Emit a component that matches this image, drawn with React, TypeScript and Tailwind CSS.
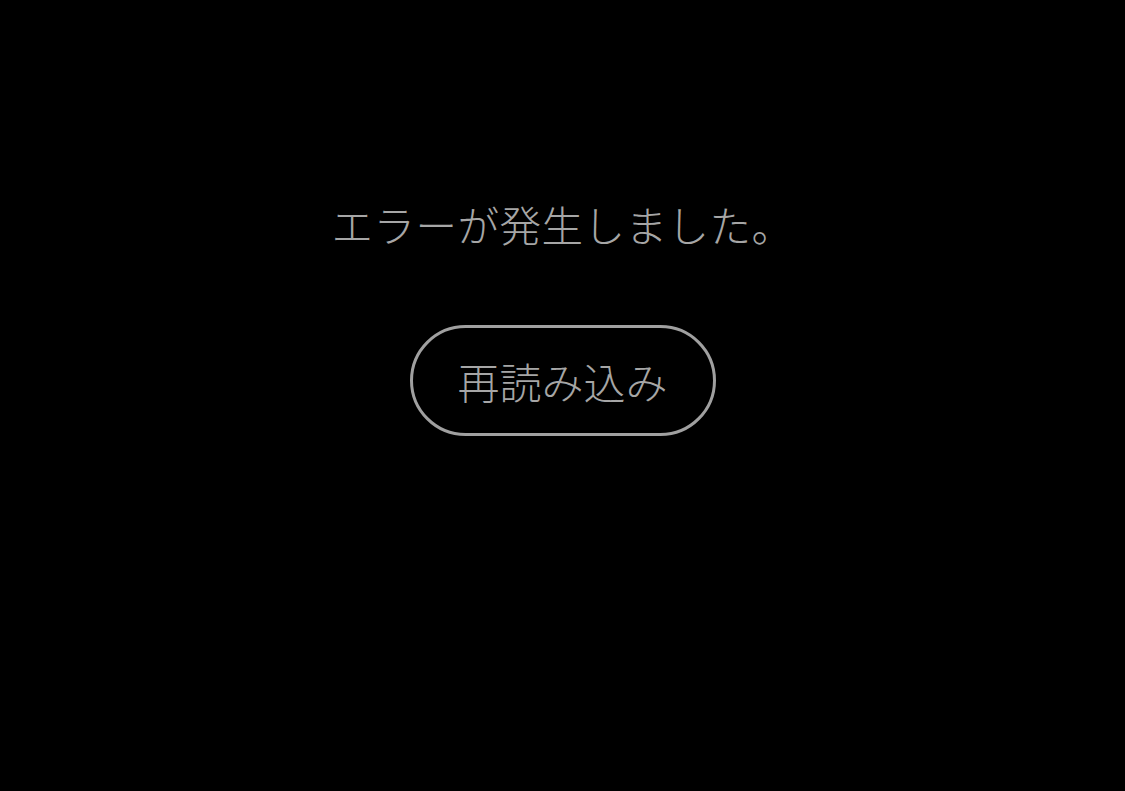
export default function App() {
  return (
    <main
      className="min-h-screen bg-black flex flex-col items-center pt-[194px]"
      style={{ fontFamily: '"Noto Sans CJK JP", "Noto Sans", sans-serif' }}
    >
      <p className="text-[41.5px] leading-[60px] font-light text-[#a6a6a6] tracking-[0.5px]">
        エラーが発生しました。
      </p>

      <button
        type="button"
        onClick={() => window.location.reload()}
        className="mt-[71px] w-[306px] h-[111px] rounded-full border-[3px] border-[#a0a0a0] text-[42px] leading-none font-light text-[#a6a6a6] flex items-center justify-center"
      >
        再読み込み
      </button>
    </main>
  );
}
